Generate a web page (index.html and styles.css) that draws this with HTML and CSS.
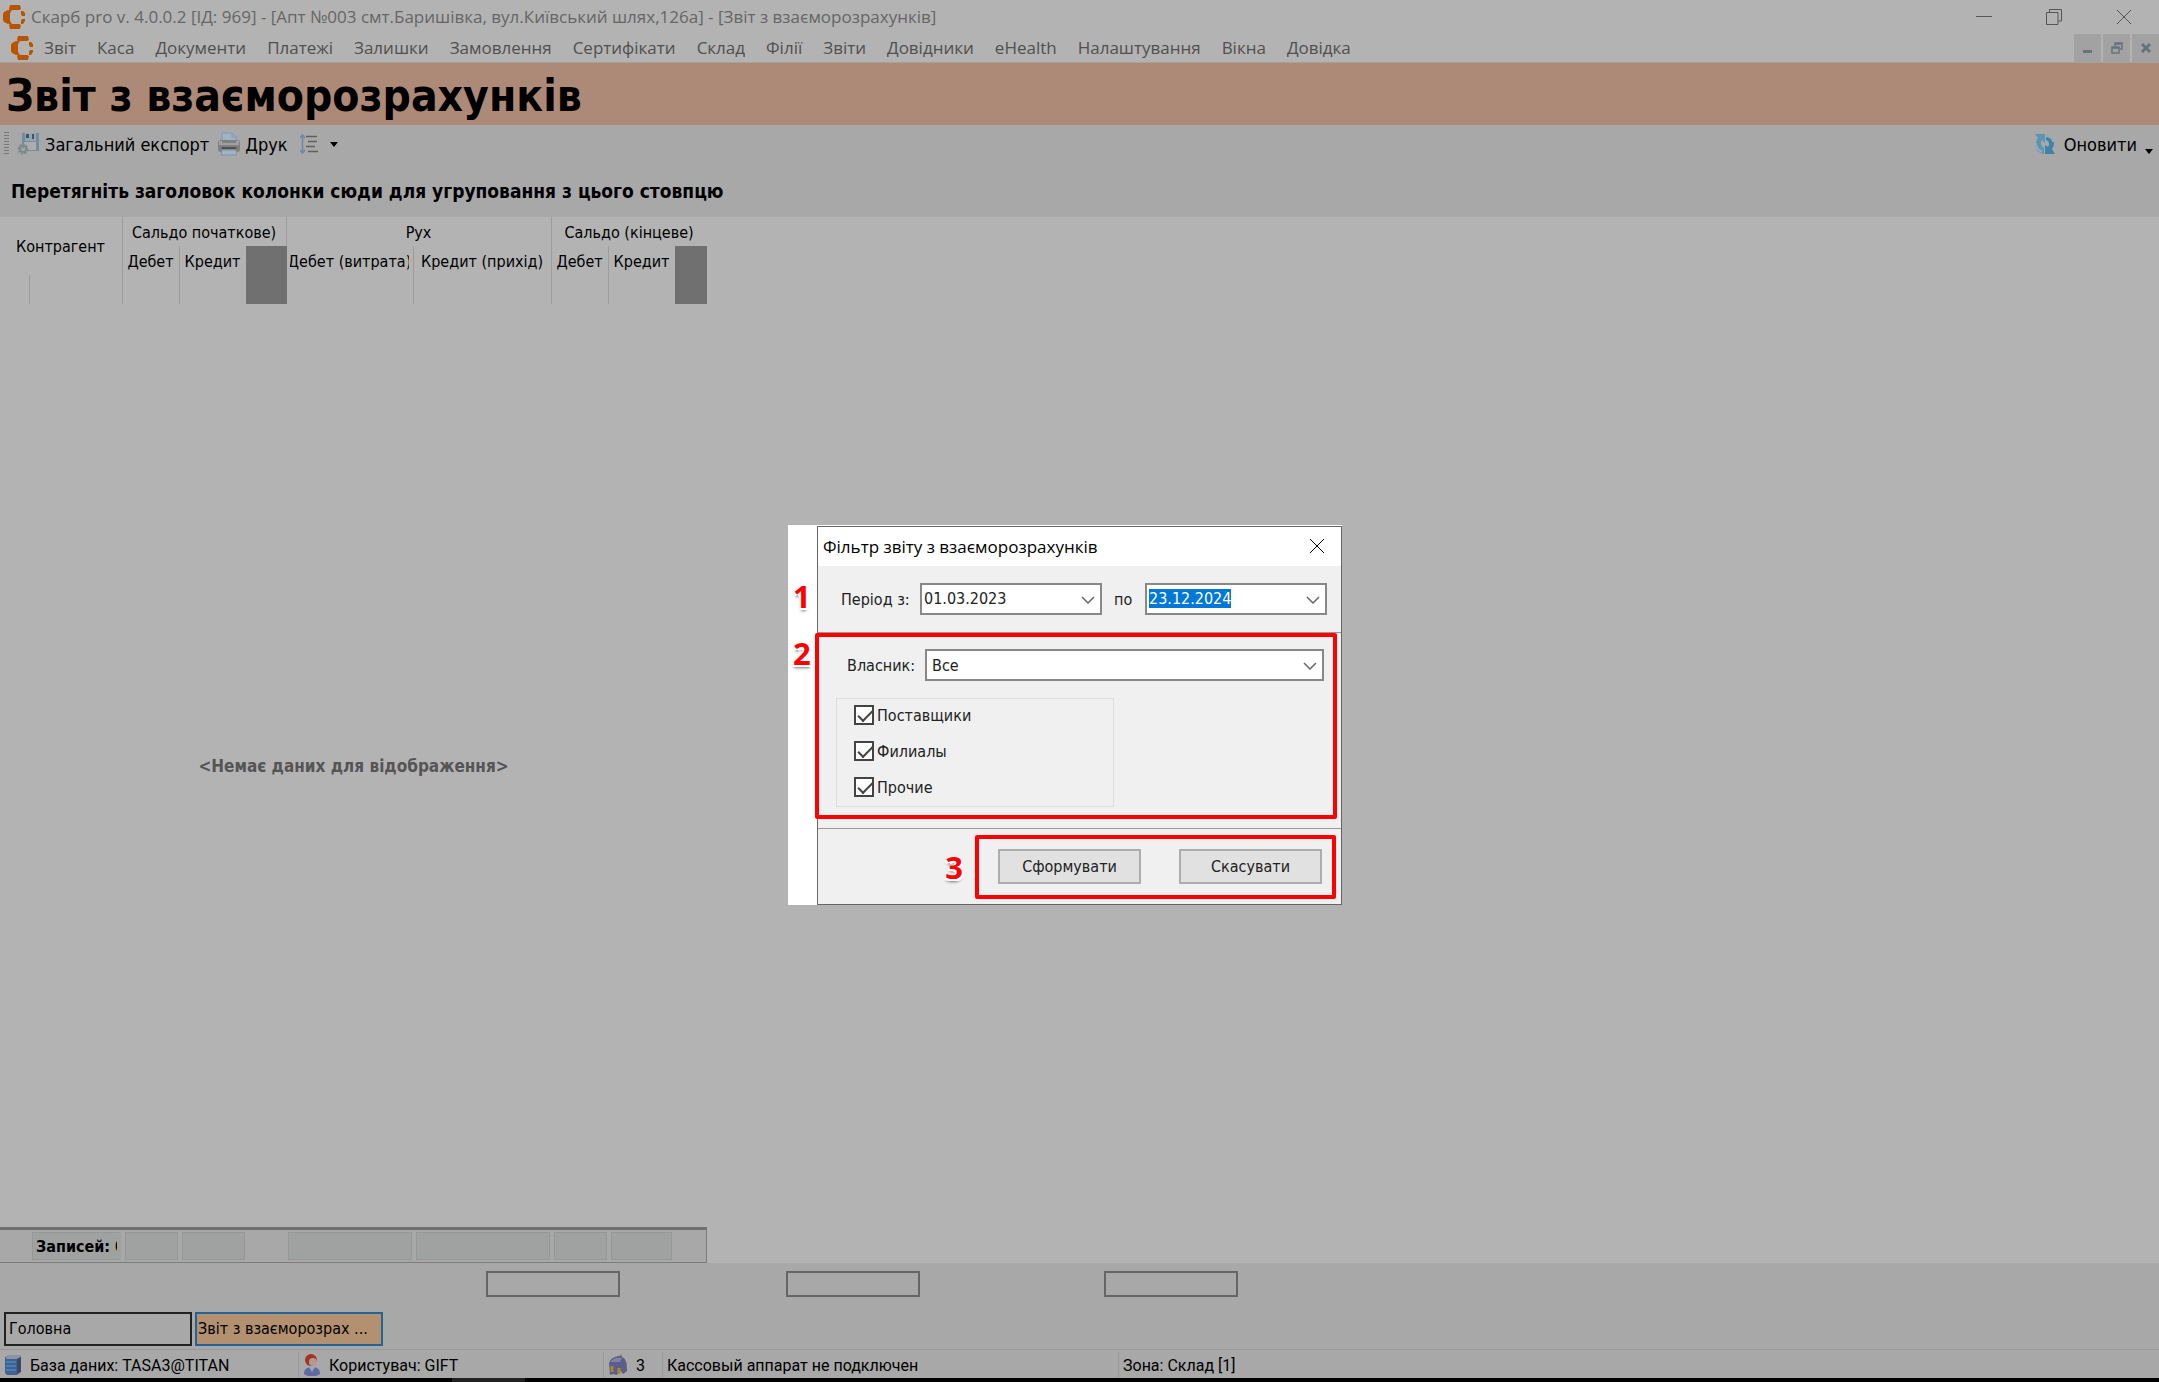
FILE: index.html
```html
<!DOCTYPE html>
<html lang="uk">

<head>
<meta charset="utf-8">
<title>Скарб pro</title>
<link rel="stylesheet" href="styles.css">
</head>

<body>

    <svg class="defs" width="0" height="0">
        <symbol id="logo" viewBox="0 0 22 24">
            <path d="M7 0h10l1 4-2 1H8L6 4zM8 19h8l2 1-1 4H7l-1-4zM5 5l2 2v10l-2 2-4-2-1-2V9l1-2z" fill="#b85300"/>
            <path d="M7 4l-2 2 2 2 2-3zM5 18l2 2 2-1-2-3zM18 6h2l2 2v3h-3l-1-2zM19 14h3v2l-2 3h-2v-3z" fill="#b85300"/>
        </symbol>
        <symbol id="chevron" viewBox="0 0 14 8">
            <path d="M1 1l6 6 6-6" fill="none" stroke="#666" stroke-width="1.500"/>
        </symbol>
        <symbol id="cross" viewBox="0 0 16 16">
            <path d="M1 1l14 14M15 1L1 15" fill="none" stroke="currentColor"/>
        </symbol>
    </svg>

    <header class="titlebar">
        <svg class="logo"><use href="#logo"/></svg>
        <span class="titlebar_text">Скарб pro v. 4.0.0.2 [ІД: 969] - [Апт №003 смт.Баришівка, вул.Київський шлях,126а] - [Звіт з взаєморозрахунків]</span>
        <button class="win_button" aria-label="Згорнути"><svg width="16" height="16"><path d="M0 7.5h16" stroke="currentColor"/></svg></button>
        <button class="win_button" aria-label="Відновити"><svg width="16" height="16"><path d="M.5 3.500h11.500v12H.5zM3.500 3.500v-3h12v11.500h-3" fill="none" stroke="currentColor"/></svg></button>
        <button class="win_button" aria-label="Закрити"><svg width="16" height="16"><use href="#cross"/></svg></button>
    </header>

    <nav class="menu">
        <svg class="logo"><use href="#logo"/></svg>
        <a href="#">Звіт</a>
        <a href="#">Каса</a>
        <a href="#">Документи</a>
        <a href="#">Платежі</a>
        <a href="#">Залишки</a>
        <a href="#">Замовлення</a>
        <a href="#">Сертифікати</a>
        <a href="#">Склад</a>
        <a href="#">Філії</a>
        <a href="#">Звіти</a>
        <a href="#">Довідники</a>
        <a href="#">eHealth</a>
        <a href="#">Налаштування</a>
        <a href="#">Вікна</a>
        <a href="#">Довідка</a>
        <div class="mdi">
            <button aria-label="Згорнути вікно"><svg width="12" height="12"><path d="M1 9.500h9" stroke="#67727e" stroke-width="3"/></svg></button>
            <button aria-label="Відновити вікно"><svg width="12" height="12"><path d="M1 5h7v6H1zM1 6h7M4 4V1h7v6H9M4 2h7" fill="none" stroke="#67727e" stroke-width="1.500"/></svg></button>
            <button aria-label="Закрити вікно"><svg width="12" height="12"><path d="M2 2l8 8M10 2l-8 8" stroke="#67727e" stroke-width="3"/></svg></button>
        </div>
    </nav>

    <h1>Звіт з взаєморозрахунків</h1>

    <div class="toolbar">
        <span class="grip"></span>
        <button>
            <svg width="24" height="24">
                <path d="M5 1h17v18H9l-4-4z" fill="#6f8fa0"/>
                <path d="M8 1h11v8H8z" fill="#93a5b0"/>
                <path d="M9 2h3v4H9zM15 2h2v5h-2z" fill="#3f5560"/>
                <path d="M7 10h12v8H7z" fill="#adadad"/>
                <circle cx="6" cy="17" r="4" fill="none" stroke="#7c8b8c" stroke-width="3" stroke-dasharray="2 1"/>
                <circle cx="6" cy="17" r="3" fill="none" stroke="#7c8b8c" stroke-width="2"/>
            </svg>
            Загальний експорт
        </button>
        <button>
            <svg width="24" height="24">
                <path d="M5 10V1h10l4 4v5z" fill="#a3b2c2" stroke="#7c9abc"/>
                <path d="M15 1v4h4" fill="none" stroke="#7c9abc"/>
                <rect x="1" y="8" width="22" height="12" rx="3" fill="#808080"/>
                <path d="M2 9h3v2h14V9h3v4H2z" fill="#a0a0a0"/>
                <path d="M5 15h14l1 2H4z" fill="#505050"/>
                <path d="M5 18h14l1 5H4z" fill="#a5b1bd" stroke="#7b94ad"/>
            </svg>
            Друк
        </button>
        <button class="lines" aria-label="Інтервал">
            <svg width="18" height="20">
                <path d="M2.500 1v18M0 4l2.500-3L5 4M0 16l2.500 3L5 16" fill="none" stroke="#6a86a8" stroke-width="1.500"/>
                <path d="M6 2.500h11M8 7.500h9M6 12.500h9M8 17.500h10" stroke="#606060" stroke-width="1.500"/>
            </svg>
            <svg class="drop" width="8" height="5"><path d="M0 0h8L4 5z"/></svg>
        </button>
        <button class="refresh">
            <svg width="22" height="23">
                <path d="M1 1h10v9L8 7c-2 3-1 6 2 8v6C2 20-1 12 4 5z" fill="#5f93b0"/>
                <path d="M12 2c8 1 10 9 6 14l3 5H11v-9l3 2c2-3 1-6-2-7z" fill="#3f83a8"/>
                <path d="M12 3c4 0 7 3 7 6M2 10c0 4 2 7 6 9" fill="none" stroke="#8fb0c0" stroke-width="2"/>
            </svg>
            Оновити
        </button>
        <button class="more" aria-label="Ще"><svg class="drop" width="8" height="5"><path d="M0 0h8L4 5z"/></svg></button>
    </div>

    <div class="group_panel">Перетягніть заголовок колонки сюди для угруповання з цього стовпцю</div>

    <main>
        <table>
            <colgroup>
                <col class="w_mark"><col class="w_name">
                <col class="w_sum"><col class="w_credit"><col class="w_gap">
                <col class="w_out"><col class="w_in">
                <col class="w_sum"><col class="w_credit"><col class="w_end">
            </colgroup>
            <tr>
                <th colspan="2" rowspan="2">Контрагент</th>
                <th colspan="3">Сальдо початкове)</th>
                <th colspan="2">Рух</th>
                <th colspan="3" class="last">Сальдо (кінцеве)</th>
            </tr>
            <tr>
                <th>Дебет</th>
                <th class="last">Кредит</th>
                <td rowspan="2" class="dark"></td>
                <th><div class="cut">Дебет (витрата)</div></th>
                <th>Кредит (прихід)</th>
                <th>Дебет</th>
                <th class="last">Кредит</th>
                <td rowspan="2" class="dark"></td>
            </tr>
            <tr>
                <td></td><td></td><td></td><td class="last"></td><td></td><td></td><td></td><td class="last"></td>
            </tr>
        </table>

        <p class="empty">&lt;Немає даних для відображення&gt;</p>

        <div class="totals">
            <output class="t_count">Записей: 0</output>
            <output class="t_sum"></output>
            <output class="t_credit"></output>
            <output class="t_out"></output>
            <output class="t_in"></output>
            <output class="t_sum"></output>
            <output class="t_last"></output>
        </div>
    </main>

    <section class="bottom">
        <div class="sums">
            <input type="text" aria-label="Сальдо початкове" readonly>
            <input type="text" aria-label="Рух" readonly>
            <input type="text" aria-label="Сальдо кінцеве" readonly>
        </div>
        <div class="tabs">
            <button>Головна</button>
            <button class="active">Звіт з взаєморозрах ...</button>
        </div>
    </section>

    <footer class="status">
        <div class="s_base">
            <svg width="18" height="22">
                <path d="M1 3l4-2h11l1 2v15l-4 3H3l-2-2z" fill="#47618d"/>
                <path d="M1 3l4-2h11l1 2-4 2H3z" fill="#8a94a8"/>
                <path d="M2 8h10M2 12h10M2 16h10" stroke="#3f80bd" stroke-width="2"/>
                <path d="M13 5v15l4-3V3z" fill="#3a4765"/>
            </svg>
            База даних: TASA3@TITAN
        </div>
        <div class="s_user">
            <svg width="18" height="22">
                <circle cx="8" cy="6" r="6" fill="#a33420"/>
                <circle cx="10" cy="8" r="4" fill="#b29a92"/>
                <path d="M1 20c0-5 3-7 8-7s8 2 8 7c-4 3-12 3-16 0z" fill="#5f6aa5"/>
                <path d="M6 13h6l-3 5z" fill="#a0a5c0"/>
            </svg>
            Користувач: GIFT
        </div>
        <div class="s_count">
            <svg width="20" height="22">
                <path d="M1 9c2-5 6-7 11-7l1-2 1 3c4 2 5 5 5 14l-4 3-3-4-3 5-4-1-3 1z" fill="#5d5d8a"/>
                <path d="M2 8c3-4 7-5 12-4l-2 4H3z" fill="#8080a5"/>
                <path d="M4 12v6M11 14v6" stroke="#a88435" stroke-width="3"/>
            </svg>
            3
        </div>
        <div class="s_cash">Кассовый аппарат не подключен</div>
        <div>Зона: Склад [1]</div>
    </footer>
    <div class="taskbar"><span></span></div>

    <!-- вікно фільтра з виносками -->
    <div class="filter_wrap">
        <form class="filter">
            <div class="filter_head">
                <span>Фільтр звіту з взаєморозрахунків</span>
                <button type="button" aria-label="Закрити"><svg width="16" height="16"><use href="#cross"/></svg></button>
            </div>

            <div class="period">
                <b class="num num_left">1</b>
                <label for="date_from">Період з:</label>
                <div class="combo">
                    <input type="text" id="date_from" value="01.03.2023">
                    <svg><use href="#chevron"/></svg>
                </div>
                <label for="date_to">по</label>
                <div class="combo">
                    <input type="text" id="date_to" value="23.12.2024">
                    <svg><use href="#chevron"/></svg>
                </div>
            </div>

            <div class="owner">
                <b class="num num_left">2</b>
                <div class="mark">
                    <div class="owner_row">
                        <label for="owner">Власник:</label>
                        <div class="combo">
                            <select id="owner"><option>Все</option></select>
                            <svg><use href="#chevron"/></svg>
                        </div>
                    </div>
                    <div class="kinds">
                        <label><input type="checkbox" checked>Поставщики</label>
                        <label><input type="checkbox" checked>Филиалы</label>
                        <label><input type="checkbox" checked>Прочие</label>
                    </div>
                </div>
            </div>

            <div class="actions">
                <b class="num">3</b>
                <div class="mark">
                    <button type="submit">Сформувати</button>
                    <button type="button">Скасувати</button>
                </div>
            </div>
        </form>
    </div>

<script>
    //виділити кінцеву дату
    let date_to = document.getElementById("date_to");
    date_to.focus();
    date_to.select();
</script>

</body>

</html>
```
FILE: styles.css
```css
* {
    box-sizing: border-box;
}

body {
    margin: 0;
    min-height: 100vh;
    display: flex;
    flex-direction: column;
    position: relative;
    background-color: #b3b3b3;
    color: #000;
    font-family: "DejaVu Sans Condensed", "DejaVu Sans", sans-serif;
    font-size: 17px;
}

button, input, select {
    font: inherit;
    color: inherit;
    margin: 0;
    padding: 0;
    border: none;
    background: none;
    border-radius: 0;
}

.defs {
    position: absolute;
}

.logo {
    width: 22px;
    height: 24px;
    flex: none;
}

/* заголовок вікна */
.titlebar {
    display: flex;
    align-items: center;
    height: 33px;
    padding-left: 3px;
    color: #666;
    font-family: "Open Sans", sans-serif;
    font-size: 17px;
}

.titlebar_text {
    flex: 1;
    margin-left: 6px;
    white-space: nowrap;
}

.win_button {
    width: 70px;
    height: 30px;
    color: #555;
}

.win_button svg {
    display: block;
    margin: auto;
}

.menu {
    display: flex;
    align-items: center;
    height: 30px;
    padding-left: 11px;
    border-bottom: 1px solid #a2a2a2;
    font-family: "Open Sans", sans-serif;
    font-size: 17px;
}

.menu a {
    color: #505050;
    text-decoration: none;
    margin-right: 10px;
    margin-left: 11px;
}

.mdi {
    display: flex;
    gap: 2px;
    margin-left: auto;
}

.mdi button {
    width: 27px;
    height: 28px;
    background-color: #a2a2a2;
}

h1 {
    margin: 0;
    height: 62px;
    padding-left: 6px;
    line-height: 66px;
    font-size: 44px;
    background-color: #ad8a77;
}

.toolbar {
    display: flex;
    align-items: center;
    height: 38px;
    padding-left: 4px;
    background-color: #a8a8a8;
    font-size: 18px;
}

.toolbar button {
    display: flex;
    align-items: center;
    gap: 4px;
    margin-right: 8px;
}

.grip {
    width: 5px;
    height: 24px;
    margin-right: 8px;
    background: repeating-linear-gradient(#777 0 1px, #a8a8a8 1px 3px);
}

.toolbar .lines {
    gap: 12px;
    margin-left: 4px;
}

.toolbar .refresh {
    margin-left: auto;
    gap: 8px;
}

.toolbar .more {
    margin-right: 6px;
    padding-top: 14px;
}

.group_panel {
    height: 54px;
    padding-left: 11px;
    line-height: 56px;
    font-size: 19px;
    font-weight: bold;
    background-color: #a8a8a8;
}

/* таблиця */
main {
    flex: 1;
    display: flex;
    flex-direction: column;
    width: 707px;
}

table {
    width: 707px;
    table-layout: fixed;
    border-collapse: separate;
    border-spacing: 0;
    font-size: 16px;
}

.w_mark { width: 30px; }
.w_name { width: 93px; }
.w_sum { width: 57px; }
.w_credit { width: 66px; }
.w_gap { width: 41px; }
.w_out { width: 127px; }
.w_in { width: 138px; }
.w_end { width: 32px; }

th, td {
    height: 29px;
    padding: 2px 1px 0 0;
    border-right: 1px solid #9c9c9c;
    font-weight: normal;
    white-space: nowrap;
}

th[rowspan] {
    padding-top: 0;
}

.last, td.dark {
    border-right: none;
}

.dark {
    background-color: #707070;
}

.cut {
    display: flex;
    justify-content: center;
    margin: 0 3px;
    overflow: hidden;
}

.empty {
    flex: 1;
    display: flex;
    align-items: center;
    justify-content: center;
    margin: 0;
    color: #555;
    font-weight: bold;
}

.totals {
    display: flex;
    gap: 4px;
    height: 36px;
    padding: 2px 0 2px 32px;
    border: 1px solid #7c7c7c;
    border-top: 3px solid #707070;
    border-left: none;
    background-color: #a8a8a8;
}

.totals output {
    height: 28px;
    border: 1px solid #959898;
    background-color: #9fa2a0;
    line-height: 28px;
    font-size: 16px;
    font-weight: bold;
    white-space: nowrap;
    overflow: hidden;
}

.totals .t_count {
    width: 89px;
    padding-left: 3px;
    border-right: 4px solid #9fa2a0;
}

.t_sum { width: 53px; }
.t_credit { width: 63px; }
.t_in { width: 134px; }
.t_last { width: 61px; }

.t_out {
    width: 124px;
    margin-left: 39px;
}

.bottom {
    background-color: #a8a8a8;
}

.sums {
    display: flex;
    padding: 8px 0 15px 486px;
}

.sums input {
    width: 134px;
    height: 26px;
    margin-right: 166px;
    border: 2px solid #666;
}

.sums input:last-child {
    margin-left: 18px;
}

.tabs {
    display: flex;
    gap: 3px;
    padding: 0 4px 3px;
}

.tabs button {
    width: 188px;
    height: 34px;
    padding: 0 0 2px 3px;
    border: 2px solid #222;
    text-align: left;
    white-space: nowrap;
    font-size: 16px;
}

.tabs .active {
    padding-left: 1px;
    border-color: #23639a;
    background-color: #b3906f;
}

.status {
    display: flex;
    height: 29px;
    padding-top: 2px;
    border-top: 1px solid #999;
    background-color: #a8a8a8;
    font-family: Roboto, "Liberation Sans", sans-serif;
    font-size: 16px;
    white-space: nowrap;
}

.status div {
    display: flex;
    align-items: center;
    gap: 8px;
    padding-left: 4px;
    border-right: 1px solid #999;
}

.status div:last-child {
    border-right: none;
}

.s_base { width: 299px; }
.s_user { width: 305px; }
.s_count { width: 59px; }
.s_cash { width: 456px; }

.taskbar {
    height: 4px;
    background-color: #000;
}

.taskbar span {
    display: block;
    width: 73px;
    height: 4px;
    margin-left: 452px;
    background-color: #222;
}

/* вікно фільтра */
.filter_wrap {
    position: absolute;
    left: 36.5%;
    top: 38%;
    width: 554px;
    padding: 1px 0 0 29px;
    background-color: #fff;
}

.filter {
    border: 1px solid #666;
    background-color: #f0f0f0;
    font-size: 16px;
    color: #222;
}

.filter_head {
    display: flex;
    align-items: center;
    justify-content: space-between;
    height: 39px;
    padding: 0 16px 0 5px;
    background-color: #fff;
    color: #000;
    font-family: "Open Sans", sans-serif;
    font-size: 17px;
}

.filter_head button {
    height: 22px;
}

.period {
    position: relative;
    display: flex;
    align-items: center;
    height: 67px;
    padding-left: 23px;
    border-bottom: 1px solid #999;
}

.period label {
    width: 79px;
}

.period .combo {
    width: 182px;
}

.period .combo + label {
    width: 43px;
    padding-left: 12px;
}

.combo {
    position: relative;
    height: 32px;
}

.combo input, .combo select {
    width: 100%;
    height: 100%;
    padding: 0 0 2px 2px;
    border: 2px solid #888;
    background-color: #fff;
    appearance: none;
    outline: none;
}

.combo select {
    padding: 0 0 0 5px;
}

.combo svg {
    position: absolute;
    right: 7px;
    top: 13px;
    width: 14px;
    height: 8px;
}

.combo input::selection {
    background-color: #0078d7;
    color: #fff;
}

.owner {
    position: relative;
    height: 196px;
    border-bottom: 1px solid #999;
}

.mark {
    border: 4px solid #f00;
    border-radius: 2px;
}

.owner .mark {
    height: 186px;
    margin: 0 4px 0 -3px;
    padding: 12px 9px 0 17px;
}

.owner_row {
    display: flex;
    align-items: center;
    padding-left: 11px;
}

.owner_row label {
    width: 78px;
}

.owner_row .combo {
    flex: 1;
}

.kinds {
    display: flex;
    flex-direction: column;
    gap: 16px;
    width: 278px;
    margin-top: 17px;
    padding: 6px 0 9px 17px;
    border: 1px solid #ddd;
}

.kinds label {
    display: flex;
    align-items: center;
    gap: 3px;
    height: 20px;
}

.kinds input {
    width: 20px;
    height: 20px;
    appearance: none;
    border: 2px solid #444;
    background-color: #fff;
}

.kinds input:checked::before {
    content: "";
    display: block;
    width: 13px;
    height: 6px;
    margin: 3px 0 0 2px;
    border-left: 2px solid #444;
    border-bottom: 2px solid #444;
    transform: rotate(-45deg);
}

.actions {
    display: flex;
    justify-content: flex-end;
    align-items: center;
    gap: 12px;
    height: 75px;
    padding-right: 5px;
}

.actions .mark {
    display: flex;
    gap: 38px;
    width: 361px;
    height: 64px;
    padding: 10px 0 0 19px;
}

.actions button {
    width: 143px;
    height: 35px;
    border: 2px solid #adadad;
    background-color: #e1e1e1;
}

/* номери виносок */
.num {
    color: #f00;
    font-family: "Open Sans", sans-serif;
    font-size: 31px;
    line-height: 40px;
    text-shadow: 0 0 2px #fff, -2px 2px 0 #fff, 2px 2px 0 #fff, 0 3px 3px #777;
}

.num_left {
    position: absolute;
    left: -25px;
    top: 10px;
}

.owner .num_left {
    top: 0;
}
```
